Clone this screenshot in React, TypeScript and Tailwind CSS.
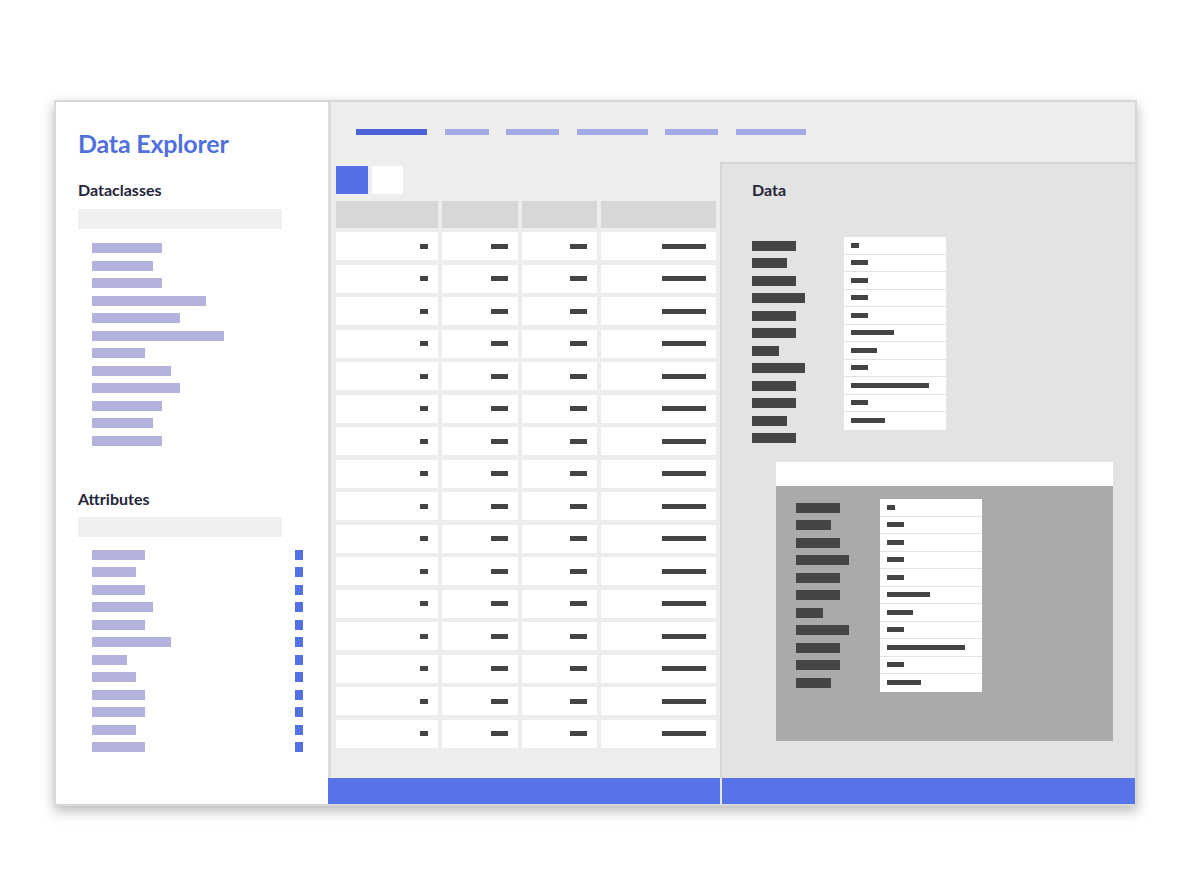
const dataclasses = [70, 61, 70, 114, 88, 132, 53, 79, 88, 70, 61, 70];
const attributes = [53, 44, 53, 61, 53, 79, 35, 44, 53, 53, 44, 53];
const tabs = [71, 44, 53, 71, 53, 70];
const labels = [44, 35, 44, 53, 44, 44, 27, 53, 44, 44, 35, 44];
const values = [8, 17, 17, 17, 17, 43, 26, 17, 78, 17, 34];
const cols = [8, 17, 17, 44];
const rows = Array.from({ length: 16 }, (_, i) => i);

function ValueBox({ items }: { items: number[] }) {
  return (
    <div className="w-[102px] self-start bg-white flex flex-col">
      {items.map((w, i) => (
        <div
          key={i}
          className={
            "h-[17.5px] flex items-center pl-[7px] " +
            (i < items.length - 1 ? "border-b border-[#e2e2e2]" : "")
          }
        >
          <div className="h-[5px] bg-[#444]" style={{ width: w }} />
        </div>
      ))}
    </div>
  );
}

function Labels({ items }: { items: number[] }) {
  return (
    <div className="flex flex-col">
      {items.map((w, i) => (
        <div key={i} className="h-[17.5px] flex items-center">
          <div className="h-[10px] bg-[#454545]" style={{ width: w }} />
        </div>
      ))}
    </div>
  );
}

export default function App() {
  return (
    <div className="w-[1200px] h-[882px] bg-white pt-[100px] pl-[54px] font-['Lato',sans-serif]">
      <div className="w-[1083px] h-[706px] flex border-2 border-[#d8d8d8] shadow-[0_5px_12px_rgba(0,0,0,0.28)]">
        {/* Sidebar */}
        <div className="w-[272px] bg-white pl-[22px]">
          <h1 className="mt-[28px] text-[25px] leading-[26px] font-bold text-[#5170e0] tracking-[-0.2px]">
            Data Explorer
          </h1>
          <h2 className="mt-[26px] text-[16px] leading-[16px] font-bold text-[#23253a]">
            Dataclasses
          </h2>
          <div className="mt-[11px] w-[204px] h-[20px] bg-[#efefef]" />
          <div className="mt-[14px] ml-[14px] flex flex-col gap-[7.5px]">
            {dataclasses.map((w, i) => (
              <div key={i} className="h-[10px] bg-[#b2b2dd]" style={{ width: w }} />
            ))}
          </div>
          <h2 className="mt-[45px] text-[16px] leading-[16px] font-bold text-[#23253a]">
            Attributes
          </h2>
          <div className="mt-[10px] w-[204px] h-[20px] bg-[#efefef]" />
          <div className="mt-[13px] pl-[14px] w-[225px] flex flex-col gap-[7.5px]">
            {attributes.map((w, i) => (
              <div key={i} className="flex justify-between items-center">
                <div className="h-[10px] bg-[#b2b2dd]" style={{ width: w }} />
                <div className="w-[8px] h-[10px] bg-[#5470e6]" />
              </div>
            ))}
          </div>
        </div>

        {/* Main */}
        <div className="flex-1 flex flex-col bg-[#ededed]">
          <div className="h-[60px] border-l-[3px] border-[#dcdcdc] pl-[25px] pt-[27px] flex items-start gap-[17.5px]">
            {tabs.map((w, i) => (
              <div
                key={i}
                className={"h-[6px] " + (i === 0 ? "bg-[#4b62d8]" : "bg-[#a2abe8]")}
                style={{ width: w }}
              />
            ))}
          </div>

          <div className="flex-1 flex border-l-[3px] border-[#dcdcdc]">
            {/* Table */}
            <div className="w-[389px] pl-[5px] pt-[4px]">
              <div className="flex gap-[4px]">
                <div className="w-[32px] h-[28px] bg-[#5370e6]" />
                <div className="w-[31px] h-[28px] bg-white" />
              </div>
              <div className="mt-[7px] grid grid-cols-[102px_76px_75px_115px] gap-x-[4px]">
                {cols.map((_, i) => (
                  <div key={i} className="h-[27px] bg-[#d7d7d7]" />
                ))}
              </div>
              <div className="mt-[4px] flex flex-col gap-[4.5px]">
                {rows.map((r) => (
                  <div key={r} className="grid grid-cols-[102px_76px_75px_115px] gap-x-[4px]">
                    {cols.map((w, i) => (
                      <div key={i} className="h-[28px] bg-white flex items-center justify-end pr-[10px]">
                        <div className="h-[5px] bg-[#444]" style={{ width: w }} />
                      </div>
                    ))}
                  </div>
                ))}
              </div>
            </div>

            {/* Data panel */}
            <div className="flex-1 bg-[#e3e3e3] border-l-2 border-t-2 border-[#d5d5d5] pl-[30px] pt-[18px]">
              <h2 className="text-[16px] leading-[16px] font-bold text-[#23253a]">Data</h2>
              <div className="mt-[39px] flex items-start">
                <div className="w-[92px]">
                  <Labels items={labels} />
                </div>
                <ValueBox items={values} />
              </div>
              <div className="mt-[15px] ml-[24px] w-[337px]">
                <div className="h-[24px] bg-white" />
                <div className="h-[255px] bg-[#aaaaaa] pl-[20px] pt-[13px] flex items-start">
                  <div className="w-[84px]">
                    <Labels items={labels.slice(0, 11)} />
                  </div>
                  <ValueBox items={values} />
                </div>
              </div>
            </div>
          </div>

          <div className="h-[26px] flex gap-[2px] bg-[#e8e8e8]">
            <div className="w-[392px] bg-[#5674e8]" />
            <div className="flex-1 bg-[#5674e8]" />
          </div>
        </div>
      </div>
    </div>
  );
}
